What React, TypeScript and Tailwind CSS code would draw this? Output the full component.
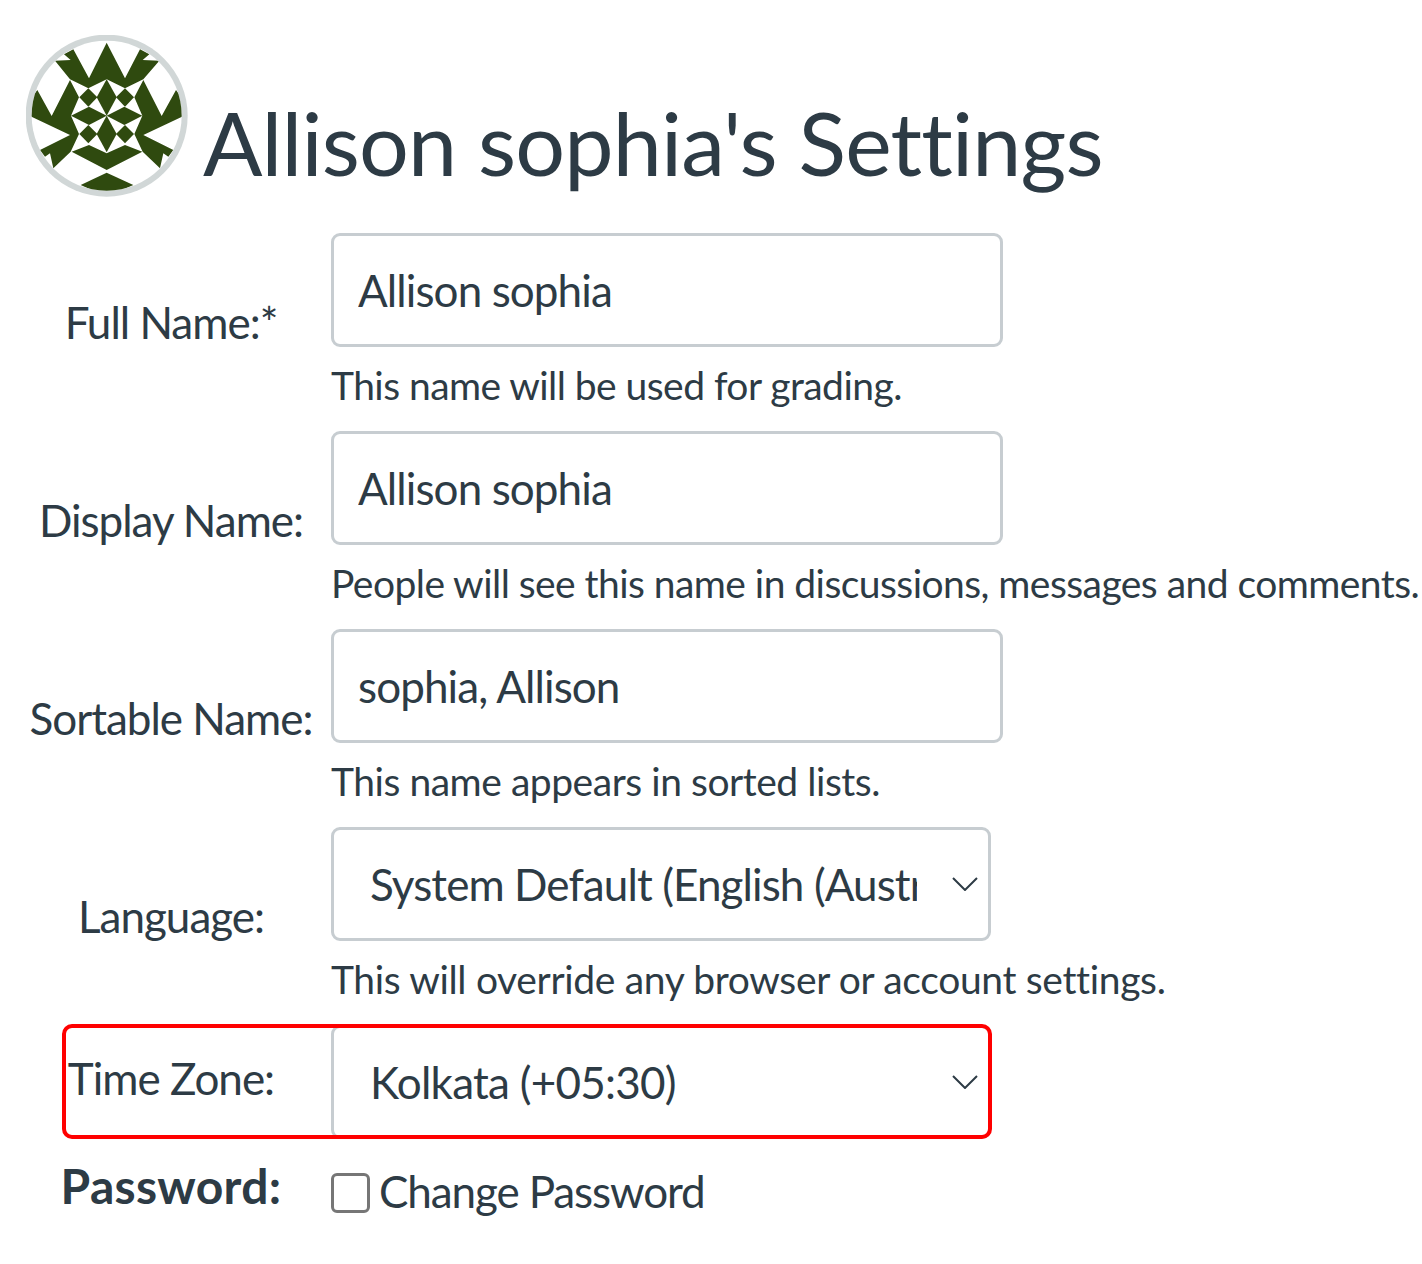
const font = { fontFamily: '"Lato", "Carlito", "Liberation Sans", sans-serif' };

function Avatar() {
  return (
    <svg viewBox="48 45 486 486" className="h-[162px] w-[162px] shrink-0">
      <defs>
        <clipPath id="c">
          <circle cx="290" cy="287" r="225" />
        </clipPath>
      </defs>
      <circle cx="290" cy="287" r="243" fill="#d1d7d7" />
      <circle cx="290" cy="287" r="225" fill="#fff" />
      <g fill="#2f4a0f" clipPath="url(#c)">
        <polygon points="290,68 345,175 390,88 418,103 398,120 448,122 400,178 345,205 290,178 235,205 180,178 135,122 182,120 162,103 190,88 237,175" />
        <polygon points="180,180 207,232 183,287 207,342 182,395 130,445 120,400 105,410 90,390 180,345 60,288 60,240 82,210 125,288" />
        <polygon points="400,180 373,232 397,287 373,342 398,395 450,445 460,400 475,410 490,390 400,345 520,288 520,240 498,210 455,288" />
        <polygon points="185,395 237,375 290,400 345,375 397,395 290,450" />
        <polygon points="212,495 290,458 370,495 290,530" />
        <polygon points="290,178 320,232 290,287 260,232" />
        <polygon points="290,287 320,342 290,397 260,342" />
        <polygon points="183,287 237,260 290,287 237,315" />
        <polygon points="397,287 343,260 290,287 343,315" />
        <polygon points="235,205 262,232 235,260 208,232" />
        <polygon points="345,205 372,232 345,260 318,232" />
        <polygon points="235,315 262,342 235,370 208,342" />
        <polygon points="345,315 372,342 345,370 318,342" />
      </g>
    </svg>
  );
}

function Chevron() {
  return (
    <svg viewBox="0 0 26 14" className="pointer-events-none absolute right-[13px] top-[50px] h-[14px] w-[26px]" fill="none" stroke="#2d3b45" strokeWidth="2">
      <path d="M1 1 L13 13 L25 1" />
    </svg>
  );
}

function Row({ label, help, helpClass, children }: { label: string; help: string; helpClass: string; children: React.ReactNode }) {
  return (
    <div className="flex h-[198px] items-start">
      <label className="w-[284px] whitespace-nowrap pt-[61px] text-center text-[44px] leading-[56px] tracking-[-1px]">{label}</label>
      <div className="ml-[18px] min-w-0 flex-1">
        {children}
        <p className={`mt-[13px] whitespace-nowrap text-[39px] leading-[50px] ${helpClass}`}>{help}</p>
      </div>
    </div>
  );
}

function TextBox({ value }: { value: string }) {
  return (
    <input
      readOnly
      value={value}
      className="block h-[114px] w-[672px] rounded-[9px] border-[3px] border-[#c7cdd1] bg-white px-[24px] text-[44px] tracking-[-0.9px] text-[#2d3b45] outline-none"
    />
  );
}

function Dropdown({ value, spacing }: { value: string; spacing: string }) {
  return (
    <div className="relative h-[114px] w-[660px]">
      <select
        defaultValue={value}
        className={`block h-full w-full appearance-none rounded-[9px] border-[3px] border-[#c7cdd1] bg-white pl-[36px] pr-[71px] text-[44px] text-[#2d3b45] outline-none ${spacing}`}
      >
        <option>{value}</option>
      </select>
      <Chevron />
    </div>
  );
}

export default function App() {
  return (
    <div className="h-[1264px] w-[1422px] overflow-hidden bg-white text-[#2d3b45]" style={font}>
      <div className="flex items-start pl-[26px] pt-[35px]">
        <Avatar />
        <h1 className="ml-[15px] mt-[57px] whitespace-nowrap text-[88px] font-normal leading-[100px] tracking-[-0.84px]">Allison sophia's Settings</h1>
      </div>
      <div className="ml-[29px] mt-[36px]">
        <Row label="Full Name:*" help="This name will be used for grading." helpClass="tracking-[-0.55px]">
          <TextBox value="Allison sophia" />
        </Row>
        <Row label="Display Name:" help="People will see this name in discussions, messages and comments." helpClass="tracking-[-0.55px]">
          <TextBox value="Allison sophia" />
        </Row>
        <Row label="Sortable Name:" help="This name appears in sorted lists." helpClass="tracking-[-0.46px]">
          <TextBox value="sophia, Allison" />
        </Row>
        <Row label="Language:" help="This will override any browser or account settings." helpClass="tracking-[-0.34px]">
          <Dropdown value="System Default (English (Australia))" spacing="tracking-[-0.9px]" />
        </Row>
        <div className="relative flex h-[133px] items-start">
          <label className="w-[284px] pt-[25px] text-center text-[44px] leading-[56px] tracking-[-1px]">Time Zone:</label>
          <div className="ml-[18px]">
            <Dropdown value="Kolkata (+05:30)" spacing="tracking-[-0.75px]" />
          </div>
          <div className="pointer-events-none absolute -top-[1px] left-[33px] h-[115px] w-[930px] rounded-[10px] border-[4px] border-[#ff0000]" />
        </div>
        <div className="flex items-start">
          <div className="w-[284px] text-center text-[48px] font-bold leading-[56px] tracking-[0.3px]">Password:</div>
          <div className="ml-[18px] flex items-center pt-[15px]">
            <span className="h-[40px] w-[39px] rounded-[6px] border-[3px] border-[#767676] bg-white" />
            <span className="ml-[9px] pb-[4px] text-[44px] leading-[36px] tracking-[-1.1px]">Change Password</span>
          </div>
        </div>
      </div>
    </div>
  );
}
